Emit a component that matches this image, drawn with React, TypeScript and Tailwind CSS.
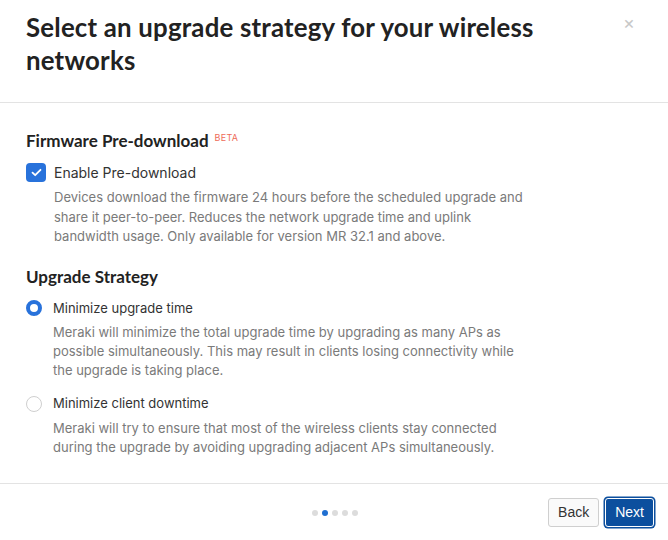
import React, { useState } from 'react';

const UpgradeStrategyModal: React.FC = () => {
  const [preDownload, setPreDownload] = useState(true);
  const [strategy, setStrategy] = useState<'time' | 'downtime'>('time');

  return (
    <div className="w-[668px] h-[540px] bg-white flex flex-col font-['Inter',sans-serif]">
      {/* Header */}
      <div className="relative px-[26px] pt-[11px] h-[103px] border-b border-[#e3e3e3]">
        <h1 className="font-['Lato',sans-serif] font-bold text-[25.8px] leading-[33px] text-[#222] w-[530px] tracking-[0.2px]">
          Select an upgrade strategy for your wireless networks
        </h1>
        <button className="absolute right-[33px] top-[14px] text-[#c8c8c8] text-[18px] leading-none" aria-label="Close">
          ×
        </button>
      </div>

      {/* Body */}
      <div className="flex-1 px-[26px] pt-[27px]">
        <h2 className="font-['Lato',sans-serif] font-bold text-[17px] leading-[22px] text-[#222] flex items-start">
          Firmware Pre-download
          <span className="ml-[6px] mt-[-3px] text-[9px] font-normal font-['Inter',sans-serif] text-[#ee6b58] tracking-[0.3px]">BETA</span>
        </h2>

        <label className="mt-[10px] flex items-center gap-[8px] cursor-pointer" onClick={() => setPreDownload(!preDownload)}>
          <span className={`w-[20px] h-[19px] rounded-[4px] flex items-center justify-center ${preDownload ? 'bg-[#2872db]' : 'border border-[#ccc] bg-white'}`}>
            {preDownload && (
              <svg width="11" height="9" viewBox="0 0 11 9" fill="none">
                <path d="M1.5 4.6 L4.2 7.2 L9.5 1.8" stroke="white" strokeWidth="1.8" strokeLinecap="round" strokeLinejoin="round" />
              </svg>
            )}
          </span>
          <span className="text-[14px] text-[#333]">Enable Pre-download</span>
        </label>
        <p className="ml-[28px] mt-[5px] w-[480px] text-[13px] leading-[19.5px] text-[#7a7a7a]">
          Devices download the firmware 24 hours before the scheduled upgrade and share it peer-to-peer. Reduces the network upgrade time and uplink bandwidth usage. Only available for version MR 32.1 and above.
        </p>

        <h2 className="mt-[19px] font-['Lato',sans-serif] font-bold text-[17px] leading-[22px] text-[#222]">
          Upgrade Strategy
        </h2>

        <label className="mt-[11px] flex items-center gap-[11px] cursor-pointer" onClick={() => setStrategy('time')}>
          <span className={`w-[16px] h-[16px] rounded-full ${strategy === 'time' ? 'border-[4px] border-[#2872db]' : 'border border-[#cfcfcf]'}`} />
          <span className="text-[13px] text-[#333]">Minimize upgrade time</span>
        </label>
        <p className="ml-[27px] mt-[5px] w-[480px] text-[13px] leading-[19px] text-[#7a7a7a]">
          Meraki will minimize the total upgrade time by upgrading as many APs as possible simultaneously. This may result in clients losing connectivity while the upgrade is taking place.
        </p>

        <label className="mt-[14px] flex items-center gap-[11px] cursor-pointer" onClick={() => setStrategy('downtime')}>
          <span className={`w-[16px] h-[16px] rounded-full ${strategy === 'downtime' ? 'border-[4px] border-[#2872db]' : 'border border-[#cfcfcf]'}`} />
          <span className="text-[13px] text-[#333]">Minimize client downtime</span>
        </label>
        <p className="ml-[27px] mt-[5px] w-[480px] text-[13px] leading-[19px] text-[#7a7a7a]">
          Meraki will try to ensure that most of the wireless clients stay connected during the upgrade by avoiding upgrading adjacent APs simultaneously.
        </p>
      </div>

      {/* Footer */}
      <div className="h-[57px] border-t border-[#e3e3e3] flex items-center px-[14px] relative">
        <div className="absolute left-[312px] top-[26px] flex gap-[4px]">
          {[0, 1, 2, 3, 4].map((i) => (
            <span key={i} className={`w-[6px] h-[6px] rounded-full ${i === 1 ? 'bg-[#1f6fd1]' : 'bg-[#dcdcdc]'}`} />
          ))}
        </div>
        <div className="ml-auto flex gap-[6px] font-['Liberation_Sans',sans-serif]">
          <button className="h-[29px] px-[9px] border border-[#cfcfcf] rounded-[3px] bg-[#fafafa] text-[14px] text-[#333]">
            Back
          </button>
          <button className="h-[29px] px-[9px] rounded-[3px] bg-[#0c4f9e] text-[14px] text-white border border-white ring-[1.5px] ring-[#0c4f9e]">
            Next
          </button>
        </div>
      </div>
    </div>
  );
};

export default function App() {
  return <UpgradeStrategyModal />;
}
